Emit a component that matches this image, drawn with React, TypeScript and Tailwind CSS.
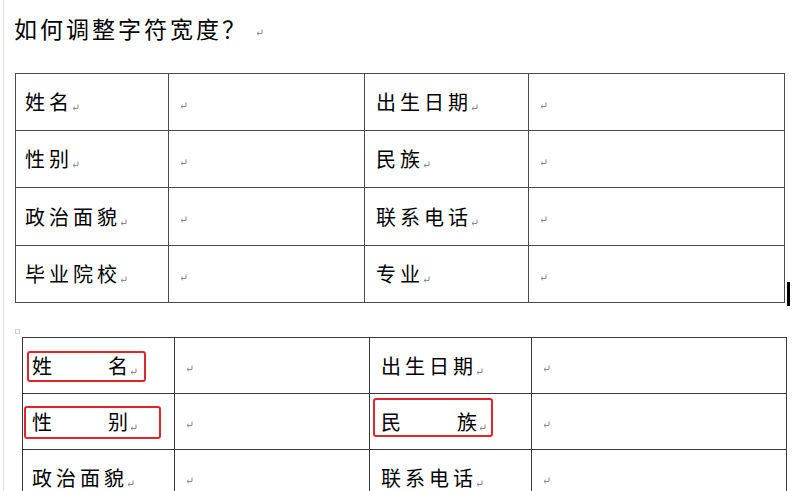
import React from "react";

const F = { fontFamily: '"Noto Sans CJK SC", "Noto Sans", sans-serif' };

function Mark({ className = "" }: { className?: string }) {
  return (
    <svg width="7" height="7" viewBox="0 0 7 7" className={className}>
      <path d="M6 0.5 V4.5 H1.2" stroke="#8a8a8a" strokeWidth="1" fill="none" />
      <path d="M2.8 2.8 L1 4.5 L2.8 6.2" stroke="#8a8a8a" strokeWidth="1" fill="none" />
    </svg>
  );
}

function Label({ text }: { text: string }) {
  return (
    <div className="flex items-end text-[20px] leading-[24px] tracking-[4px] text-black" style={F}>
      <span>{text}</span>
      <Mark className="mb-[3px] -ml-[1px]" />
    </div>
  );
}

function Spread({ a, b, w }: { a: string; b: string; w: number }) {
  return (
    <div className="flex items-end text-[20px] leading-[24px] text-black" style={F}>
      <div className="flex justify-between" style={{ width: w }}>
        <span>{a}</span>
        <span>{b}</span>
      </div>
      <Mark className="mb-[3px] ml-[2px]" />
    </div>
  );
}

function Empty() {
  return (
    <div className="flex items-center bg-white pl-[11px] pt-[6px]">
      <Mark />
    </div>
  );
}

function Cell({ children, pl = "pl-[9px]" }: { children: React.ReactNode; pl?: string }) {
  return <div className={`flex items-center bg-white ${pl}`}>{children}</div>;
}

export default function App() {
  return (
    <div className="w-[792px] h-[491px] bg-white overflow-hidden flex">
      <div className="w-[3px] shrink-0" />
      <div className="w-px shrink-0 bg-[#e2e2e2]" />
      <div className="relative flex-1 flex flex-col">
        {/* heading */}
        <div className="flex items-end pl-[10px] pt-[14px] h-[44px]" style={F}>
          <span className="text-[23px] leading-[28px] tracking-[3px] text-black">如何调整字符宽度？</span>
          <Mark className="mb-[6px] ml-[8px]" />
        </div>

        {/* table 1 */}
        <div className="mt-[31px] ml-[11px] flex items-end">
          <div className="grid grid-cols-[152px_195px_163px_255px] grid-rows-[56px_56px_57px_56px] gap-px bg-[#4a4a4a] p-px">
            <Cell><Label text="姓名" /></Cell>
            <Empty />
            <Cell pl="pl-[11px]"><Label text="出生日期" /></Cell>
            <Empty />
            <Cell><Label text="性别" /></Cell>
            <Empty />
            <Cell pl="pl-[11px]"><Label text="民族" /></Cell>
            <Empty />
            <Cell><Label text="政治面貌" /></Cell>
            <Empty />
            <Cell pl="pl-[11px]"><Label text="联系电话" /></Cell>
            <Empty />
            <Cell><Label text="毕业院校" /></Cell>
            <Empty />
            <Cell pl="pl-[11px]"><Label text="专业" /></Cell>
            <Empty />
          </div>
          <div className="w-[3px] h-[24px] bg-black ml-[2px] -mb-[3px]" />
        </div>

        {/* table 2 */}
        <div className="relative mt-[34px] ml-[18px]">
          <div className="absolute -left-[7px] -top-[8px] w-[5px] h-[5px] border border-[#cfcfcf]" />
          <div className="grid grid-cols-[151px_194px_161px_254px] grid-rows-[55px_55px_55px] gap-px bg-[#3a3a3a] p-px w-fit">
            <Cell pl="pl-[9px]"><Spread a="姓" b="名" w={96} /></Cell>
            <Empty />
            <Cell pl="pl-[11px]"><Label text="出生日期" /></Cell>
            <Empty />
            <Cell pl="pl-[9px]"><Spread a="性" b="别" w={96} /></Cell>
            <Empty />
            <Cell pl="pl-[11px]"><Spread a="民" b="族" w={96} /></Cell>
            <Empty />
            <Cell pl="pl-[9px]"><Label text="政治面貌" /></Cell>
            <Empty />
            <Cell pl="pl-[11px]"><Label text="联系电话" /></Cell>
            <Empty />
          </div>
          {/* red annotation boxes */}
          <div className="absolute left-[5px] top-[14px] w-[119px] h-[31px] border-2 border-[#e0262b] rounded-[3px]" />
          <div className="absolute left-[2px] top-[69px] w-[137px] h-[33px] border-2 border-[#e0262b] rounded-[3px]" />
          <div className="absolute left-[351px] top-[61px] w-[120px] h-[39px] border-2 border-[#e0262b] rounded-[3px]" />
        </div>
      </div>
    </div>
  );
}
